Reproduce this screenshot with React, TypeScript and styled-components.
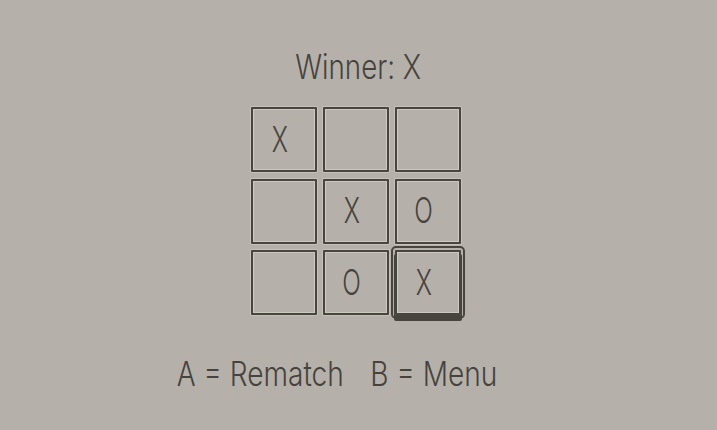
import React from "react";
import styled, { createGlobalStyle } from "styled-components";

const Global = createGlobalStyle`
  html, body { margin: 0; padding: 0; }
  body {
    background: #b5b1aa;
    width: 717px;
    height: 430px;
    overflow: hidden;
  }
`;

const Screen = styled.main`
  width: 717px;
  height: 430px;
  display: flex;
  flex-direction: column;
  align-items: center;
  color: #46433e;
  font-family: Inter, "DejaVu Sans Condensed", sans-serif;
  font-weight: 300;
`;

const Title = styled.h1`
  margin: 50px 0 0 0;
  font-size: 34px;
  font-weight: 300;
  line-height: 34px;
  transform: scaleX(0.815);
`;

const Board = styled.div`
  margin-top: 23px;
  display: grid;
  grid-template-columns: repeat(3, 66px);
  grid-template-rows: repeat(3, 65px);
  gap: 6.5px 6px;
  transform: translateX(-3px);
`;

const Cell = styled.div<{ $selected?: boolean }>`
  box-sizing: border-box;
  display: flex;
  align-items: center;
  justify-content: center;
  border: 2px solid #48453f;
  box-shadow: inset 0 0 0 1px #cdc9c1, 0 0 0 1px #c6c2ba;
  border-radius: 1px;
  ${({ $selected }) =>
    $selected &&
    `
    outline: 2px solid #48453f;
    outline-offset: 2px;
    box-shadow: inset 0 0 0 1px #cdc9c1, 0 5px 0 1px #48453f;
  `}
`;

/* marks sit slightly left of and above the cell centre */
const Mark = styled.span`
  font-size: 36px;
  line-height: 1;
  transform: translate(-4px, -1px) scaleX(0.68);
`;

const Footer = styled.div`
  margin-top: 42px;
  display: flex;
  gap: 32px;
  font-size: 34px;
  line-height: 34px;
  transform: translateX(-21px) scaleX(0.826);
`;

const board = ["X", "", "", "", "X", "O", "", "O", "X"];

export default function App() {
  return (
    <>
      <Global />
      <Screen>
        <Title>Winner: X</Title>
        <Board>
          {board.map((v, i) => (
            <Cell key={i} $selected={i === 8}>
              {v && <Mark>{v}</Mark>}
            </Cell>
          ))}
        </Board>
        <Footer>
          <span>A = Rematch</span>
          <span>B = Menu</span>
        </Footer>
      </Screen>
    </>
  );
}
